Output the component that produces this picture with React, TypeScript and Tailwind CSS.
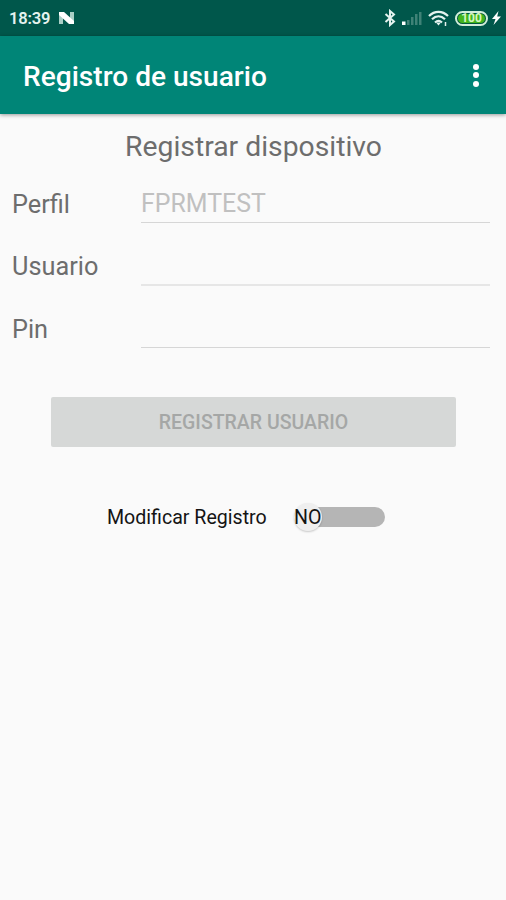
const fields = [
  { label: "Perfil", value: "FPRMTEST", line: "h-px bg-[#d6d6d6]", row: "h-[62px]" },
  { label: "Usuario", value: "", line: "h-[2px] bg-[#e6e6e6]", row: "h-[63px]" },
  { label: "Pin", value: "", line: "h-px bg-[#d6d6d6]", row: "h-[63px]" },
];

function StatusBar() {
  return (
    <div className="flex h-9 items-center bg-[#00574b] pl-[9px] text-[#e4f3ef]">
      <span className="w-[41px] pt-[2px] text-[16.500px] font-semibold leading-5 tracking-[-0.2px] whitespace-nowrap">18:39</span>
      <svg className="ml-2" width="17" height="14" viewBox="0 0 17 14">
        <path d="M1 1h4v12H1zM12 1h4v12h-4z" fill="#a9cfc6" />
        <path d="M1 1h5l10 9v3h-5L1 4z" fill="#fff" />
      </svg>
      <div className="ml-auto flex items-center">
        <svg width="12" height="18" viewBox="0 0 12 18" fill="none" stroke="#e4f3ef" strokeWidth="2">
          <path d="M1.500 5l8.500 7.500-4 3.500V2l4 3.500L1.500 13" />
        </svg>
        <svg className="ml-[5px]" width="21" height="15" viewBox="0 0 21 15">
          <rect x="1" y="10.500" width="3.500" height="3.500" fill="#fff" />
          <g fill="#3f8277">
            <rect x="6" y="9" width="2.500" height="5" />
            <rect x="10" y="6" width="2.500" height="8" />
            <rect x="14" y="3" width="2.500" height="11" />
            <rect x="18" y="1" width="2.500" height="13" />
          </g>
        </svg>
        <svg className="ml-[6px]" width="21" height="17" viewBox="0 0 21 17" fill="none" stroke="#e4f3ef" strokeWidth="2.200">
          <path d="M1 6c5.500-5.500 13.500-5.500 19 0" />
          <path d="M4 9.300c4-4 9-4 13 0" />
          <path d="M7 12.500c2.300-2 4.700-2 7 0" />
          <path d="M8 12.500h5L10.500 15.500z" fill="#e4f3ef" stroke="none" />
          <path d="M17.500 12v4" strokeWidth="1.500" />
        </svg>
        <div className="ml-[6px] flex h-[15px] w-[33px] items-center justify-center rounded-full border-2 border-[#d2eddb] bg-[#005b3c] p-px">
          <div className="flex h-full w-full items-center justify-center rounded-full bg-[#43b51d] text-[12px] font-bold leading-none text-[#d5f7c4]">
            100
          </div>
        </div>
        <svg className="ml-[4px] mr-[5px]" width="9" height="14" viewBox="0 0 9 14">
          <path d="M6.500 0L0 8h3.500L1.500 14 9 5.500H5.200z" fill="#fff" />
        </svg>
      </div>
    </div>
  );
}

export default function App() {
  return (
    <div className="h-[900px] w-[506px] overflow-hidden bg-[#fafafa] font-['Roboto',sans-serif] text-[#6d6d6d]">
      <StatusBar />
      <header className="flex h-[78px] items-center justify-between bg-[#008577] pl-[23px] pr-[27px] pt-[3px] text-white shadow-[0_1px_4px_rgba(0,0,0,0.4)]">
        <h1 className="text-[28.100px] font-medium leading-8 whitespace-nowrap">Registro de usuario</h1>
        <button className="-mt-[3px] flex flex-col gap-[2.500px]" aria-label="Más opciones">
          <span className="size-[6px] rounded-full bg-white" />
          <span className="size-[6px] rounded-full bg-white" />
          <span className="size-[6px] rounded-full bg-white" />
        </button>
      </header>
      <main>
        <h2 className="pl-px pt-[17px] text-center text-[28.300px] leading-8 whitespace-nowrap">Registrar dispositivo</h2>
        <div className="pl-3 pr-4 pt-[9px] text-[25.300px] leading-8">
          {fields.map((field) => (
            <div key={field.label} className={`flex ${field.row}`}>
              <label className="w-[129px] pt-[16.500px]">{field.label}</label>
              <div className="flex-1">
                <div className="h-[50px] pt-[16px] text-[24.900px] text-[#c0c0c0]">{field.value}</div>
                <div className={field.line} />
              </div>
            </div>
          ))}
        </div>
        <button className="ml-[51px] mt-[37px] flex h-[50px] w-[405px] items-center justify-center rounded-[2px] bg-[#d6d8d7] pt-[2px] text-[19.500px] font-medium text-[#a5a7a6]">
          REGISTRAR USUARIO
        </button>
        <div className="mt-[55px] flex h-[30px] items-center pl-[107px] text-[19.600px] leading-6 text-[#141414]">
          <span className="w-[187px] pt-[2px] whitespace-nowrap">Modificar Registro</span>
          <div className="relative h-[20px] w-[91px] rounded-full bg-[#b5b5b5]">
            <span className="absolute -top-[4px] left-0 size-[28px] rounded-full bg-[#efefef] shadow-[0_1px_2px_rgba(0,0,0,0.2)]" />
            <span className="absolute left-0 -top-[1px]">NO</span>
          </div>
        </div>
      </main>
    </div>
  );
}
